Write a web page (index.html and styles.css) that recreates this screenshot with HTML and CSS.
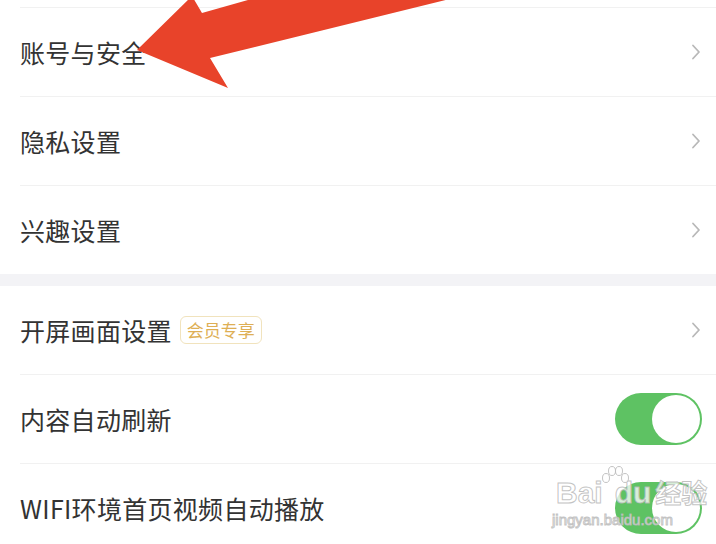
FILE: index.html
```html
<!DOCTYPE html>
<html lang="zh-CN">
<head>
<meta charset="utf-8">
<link rel="stylesheet" href="styles.css">
</head>
<body>
<div class="screen">
  <div class="group first">
    <div class="row"><span class="label">账号与安全</span><svg class="chev" width="10" height="16" viewBox="0 0 10 16"><path d="M2 1.5 L8 8 L2 14.5" fill="none" stroke="#b8b8b8" stroke-width="1.8" stroke-linecap="round" stroke-linejoin="round"/></svg></div>
    <div class="row"><span class="label">隐私设置</span><svg class="chev" width="10" height="16" viewBox="0 0 10 16"><path d="M2 1.5 L8 8 L2 14.5" fill="none" stroke="#b8b8b8" stroke-width="1.8" stroke-linecap="round" stroke-linejoin="round"/></svg></div>
    <div class="row"><span class="label">兴趣设置</span><svg class="chev" width="10" height="16" viewBox="0 0 10 16"><path d="M2 1.5 L8 8 L2 14.5" fill="none" stroke="#b8b8b8" stroke-width="1.8" stroke-linecap="round" stroke-linejoin="round"/></svg></div>
  </div>
  <div class="band"></div>
  <div class="group second">
    <div class="row"><span class="label">开屏画面设置</span><span class="badge">会员专享</span><svg class="chev" width="10" height="16" viewBox="0 0 10 16"><path d="M2 1.5 L8 8 L2 14.5" fill="none" stroke="#b8b8b8" stroke-width="1.8" stroke-linecap="round" stroke-linejoin="round"/></svg></div>
    <div class="row"><span class="label">内容自动刷新</span><span class="toggle"><span class="knob"></span></span></div>
    <div class="row"><span class="label">WIFI环境首页视频自动播放</span><span class="toggle"><span class="knob"></span></span></div>
  </div>

  <svg class="arrow" width="716" height="100" viewBox="0 0 716 100">
    <polygon points="137,50 192,-4 202,13 460,-60 470,-6 210,58 228,88" fill="#e8432a"/>
  </svg>

  <div class="watermark">
    <svg class="paw" width="30" height="28" viewBox="0 0 30 28">
      <g fill="rgba(255,255,255,0.75)" stroke="rgba(185,185,185,0.85)" stroke-width="1">
        <ellipse cx="6" cy="12" rx="3.5" ry="4.5"/>
        <ellipse cx="12" cy="5" rx="3.5" ry="4.5"/>
        <ellipse cx="19" cy="5" rx="3.5" ry="4.5"/>
        <ellipse cx="25" cy="12" rx="3.5" ry="4.5"/>
      </g>
    </svg>
    <div class="wm-top"><span class="wm-bai">Bai</span><span class="wm-du">du</span><span class="wm-jy">经验</span></div>
    <div class="wm-url">jingyan.baidu.com</div>
  </div>
</div>
</body>
</html>
```
FILE: styles.css
```css
* { box-sizing: border-box; }
html, body { margin: 0; padding: 0; background: #fff; }
body {
  font-family: "Noto Sans CJK SC", "Noto Sans", sans-serif;
  color: #333;
  overflow: hidden;
}
.screen {
  position: relative;
  width: 716px;
  height: 544px;
  overflow: hidden;
}
.group { padding-left: 20px; background: #fff; }
.group.first { margin-top: 7px; }
.row {
  display: flex;
  align-items: center;
  height: 89px;
  padding-right: 15px;
  border-top: 1px solid #f1f1f1;
}
.group.second .row:first-child { border-top: none; height: 88px; }
.label {
  font-size: 25px;
  line-height: 1;
  color: #333;
  letter-spacing: 0.3px;
}
.chev { margin-left: auto; }
.badge {
  margin-left: 8px;
  height: 28px;
  padding: 0 6px;
  border: 1px solid #f1e3bd;
  border-radius: 6px;
  font-size: 17px;
  line-height: 26px;
  color: #deaf55;
}
.band { height: 12px; background: #f3f3f6; }
.toggle {
  margin-left: auto;
  margin-right: -1px;
  position: relative;
  width: 87px;
  height: 52px;
  border-radius: 26px;
  background: #5ec263;
}
.knob {
  position: absolute;
  right: 2px;
  top: 2px;
  width: 48px;
  height: 48px;
  border-radius: 50%;
  background: #fff;
}
.arrow { position: absolute; left: 0; top: 0; }
.watermark {
  position: absolute;
  left: 556px;
  top: 474px;
  color: rgba(255,255,255,0.75);
  -webkit-text-stroke: 1px rgba(185,185,185,0.85);
  font-family: "Liberation Sans", sans-serif;
}
.paw { position: absolute; left: 44px; top: -8px; }
.wm-top { font-size: 30px; font-weight: bold; line-height: 36px; display: flex; align-items: baseline; }
.wm-du { margin-left: 12px; }
.wm-jy { margin-left: 4px; font-family: "Noto Sans CJK SC", sans-serif; font-size: 26px; }
.wm-url { font-size: 15px; line-height: 18px; margin-left: -4px; }
```
